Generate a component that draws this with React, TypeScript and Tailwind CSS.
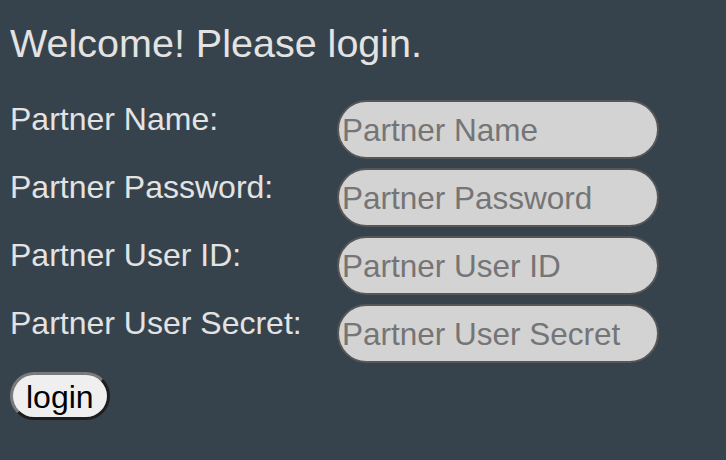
import { useState } from "react";

const fields = [
  { key: "name", label: "Partner Name:", placeholder: "Partner Name", type: "text" },
  { key: "password", label: "Partner Password:", placeholder: "Partner Password", type: "password" },
  { key: "userId", label: "Partner User ID:", placeholder: "Partner User ID", type: "text" },
  { key: "secret", label: "Partner User Secret:", placeholder: "Partner User Secret", type: "password" },
];

export default function App() {
  const [values, setValues] = useState<Record<string, string>>({});

  return (
    <div
      className="min-h-[460px] w-full bg-[#37434c] pl-[10px] pt-[20px]"
      style={{ fontFamily: '"Liberation Sans", Arial, sans-serif' }}
    >
      <h1 className="text-[39.5px] leading-[46px] text-[#e3e3e3]">Welcome! Please login.</h1>

      <form
        onSubmit={(e) => e.preventDefault()}
        className="mt-[34px] flex flex-col gap-[9px]"
      >
        {fields.map((f) => (
          <div key={f.key} className="flex items-start">
            <label className="w-[327px] pt-[1px] text-[32px] leading-[37px] text-[#e3e3e3]">{f.label}</label>
            <input
              type={f.type}
              value={values[f.key] ?? ""}
              onChange={(e) => setValues({ ...values, [f.key]: e.target.value })}
              placeholder={f.placeholder}
              className="h-[59px] w-[322px] rounded-full border-2 border-[#575757] bg-[#d3d3d3] pl-[3px] pt-[2px] text-[31.5px] text-black placeholder:text-[#757575] focus:outline-none"
            />
          </div>
        ))}

        <div>
          <button
            type="submit"
            className="rounded-full border-[3px] border-t-[#7a7a7a] border-l-[#7a7a7a] border-r-[#1e1e1e] border-b-[#1e1e1e] bg-[#efefef] px-[13px] pt-[4px] pb-[2px] text-[32px] leading-[36px] text-black"
          >
            login
          </button>
        </div>
      </form>
    </div>
  );
}
